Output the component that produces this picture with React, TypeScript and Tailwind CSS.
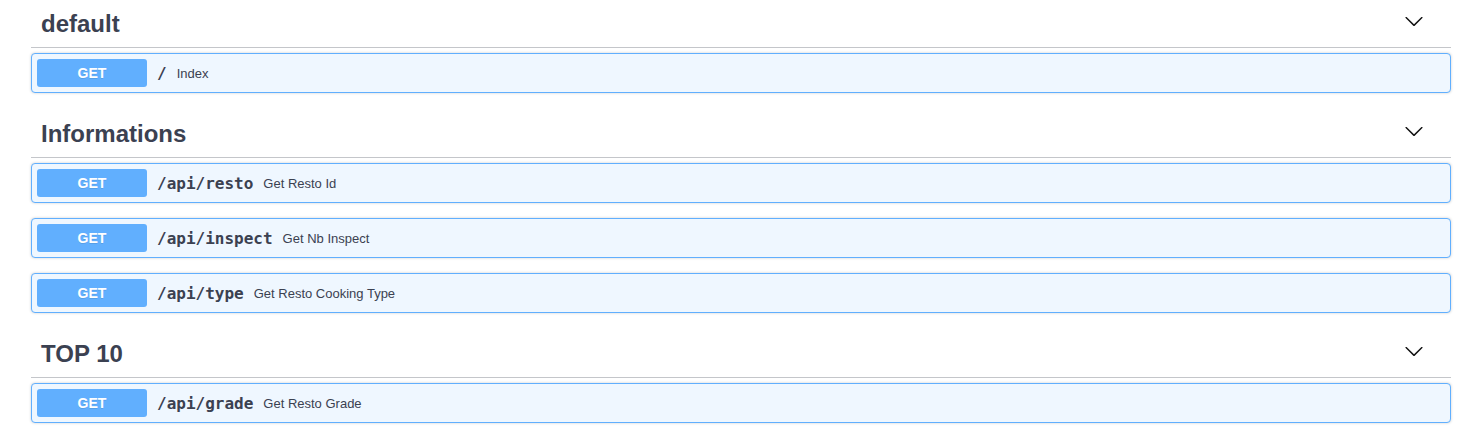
import React from "react";

type Op = { path: string; desc: string };
type Section = { tag: string; ops: Op[] };

const sections: Section[] = [
  { tag: "default", ops: [{ path: "/", desc: "Index" }] },
  {
    tag: "Informations",
    ops: [
      { path: "/api/resto", desc: "Get Resto Id" },
      { path: "/api/inspect", desc: "Get Nb Inspect" },
      { path: "/api/type", desc: "Get Resto Cooking Type" },
    ],
  },
  { tag: "TOP 10", ops: [{ path: "/api/grade", desc: "Get Resto Grade" }] },
];

function Chevron() {
  return (
    <svg width="20" height="20" viewBox="0 0 20 20" className="-translate-y-[2px] fill-[#111]">
      <path d="M17.418 6.109c.272-.268.709-.268.979 0s.271.701 0 .969l-7.908 7.83c-.27.268-.707.268-.979 0l-7.908-7.83c-.27-.268-.27-.701 0-.969.271-.268.709-.268.979 0L10 13.25l7.418-7.141z" />
    </svg>
  );
}

export default function App() {
  return (
    <div className="bg-white w-[1463px] h-[444px] overflow-hidden font-['Liberation_Sans',Arial,sans-serif] text-[#3b4151]">
      <div className="-mt-[2px] pl-[31px] pr-[12px]">
        {sections.map((s) => (
          <div key={s.tag} className="flex flex-col">
            <div className="flex items-center h-[50px] pl-[10px] pr-[27px] mb-[5px] border-b border-[rgba(59,65,81,0.3)]">
              <span className="flex-1 text-[24px] font-bold leading-[normal] translate-y-[1px]">{s.tag}</span>
              <Chevron />
            </div>
            {s.ops.map((op) => (
              <div
                key={op.path}
                className="flex items-center mb-[15px] p-[5px] border border-[#61affe] bg-[#eff7ff] rounded-[4px] shadow-[0_0_3px_rgba(0,0,0,0.19)]"
              >
                <span className="w-[110px] py-[6px] rounded-[3px] bg-[#61affe] text-white text-center text-[14px] font-bold leading-[normal] [text-shadow:0_1px_0_rgba(0,0,0,0.1)]">
                  GET
                </span>
                <span className="px-[10px] font-['DejaVu_Sans_Mono',monospace] text-[16px] font-bold leading-[normal]">
                  {op.path}
                </span>
                <span className="text-[13px] leading-[normal]">{op.desc}</span>
              </div>
            ))}
          </div>
        ))}
      </div>
    </div>
  );
}
